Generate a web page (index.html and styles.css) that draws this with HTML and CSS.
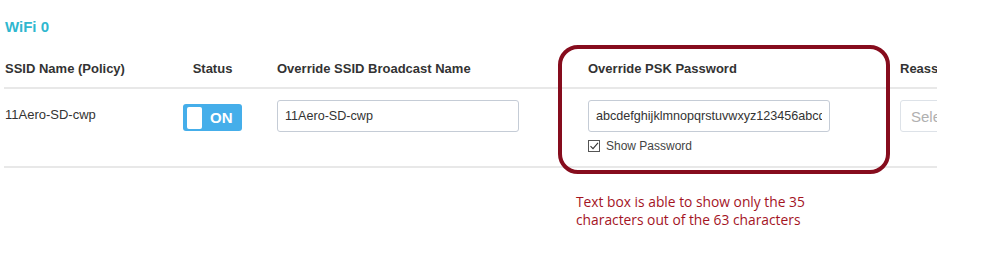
FILE: index.html
```html
<!DOCTYPE html>
<html lang="en">
<head>
    <meta charset="UTF-8">
    <title>WiFi 0 SSID Overrides</title>
    <link rel="stylesheet" href="styles.css">
</head>
<body>
    <div class="page">
        <h2 class="section-title">WiFi 0</h2>

        <div class="ssid-table">
            <div class="row head">
                <div class="cell c-name">SSID Name (Policy)</div>
                <div class="cell c-status">Status</div>
                <div class="cell c-bcast">Override SSID Broadcast Name</div>
                <div class="cell c-psk">Override PSK Password</div>
                <div class="cell c-reassign">Reassign</div>
            </div>
            <div class="row body">
                <div class="cell c-name">11Aero-SD-cwp</div>
                <div class="cell c-status">
                    <span class="toggle"><span class="knob"></span>ON</span>
                </div>
                <div class="cell c-bcast">
                    <input type="text" class="field" value="11Aero-SD-cwp">
                </div>
                <div class="cell c-psk">
                    <input type="text" class="field" value="abcdefghijklmnopqrstuvwxyz123456abcdefghijklmnopqrstuvwxyz12345">
                    <label class="show-pw">
                        <span class="check">
                            <svg width="12" height="12" viewBox="0 0 12 12"><path d="M2.5 6.2 L5 8.6 L10 2.8" fill="none" stroke="#333" stroke-width="1.1"/></svg>
                        </span>
                        Show Password
                    </label>
                </div>
                <div class="cell c-reassign">
                    <div class="select">Select</div>
                </div>
            </div>
        </div>

        <!-- annotation drawn over the screenshot -->
        <div class="callout-box"></div>
        <p class="callout-text">Text box is able to show only the 35<br>characters out of the 63 characters</p>
    </div>
</body>
</html>
```

FILE: styles.css
```css
body {
    margin: 0;
    background-color: #fff;
    font-family: "Liberation Sans", Arial, sans-serif;
    color: #333;
}
.page {
    position: relative;
    width: 999px;
    height: 271px;
    padding: 0 0 0 4px;
    box-sizing: border-box;
}
.section-title {
    margin: 0;
    padding: 18px 0 0 1px;
    font-size: 15px;
    line-height: 17px;
    font-weight: bold;
    color: #2fb7cf;
}
.ssid-table {
    width: 933px;
    margin-top: 10px;
    overflow: hidden;
}
.row {
    display: grid;
    grid-template-columns: 165px 87px 311px 312px 60px;
    border-bottom: 2px solid #e8e8e8;
}
.row.head {
    height: 42px;
    align-items: start;
    font-weight: bold;
    font-size: 13px;
}
.row.head .cell {
    padding-top: 16px;
}
.row.body {
    height: 77px;
    align-items: start;
    font-size: 13px;
}
.cell {
    white-space: nowrap;
}
.c-name {
    padding-left: 1px;
}
.row.body .c-name {
    padding-top: 18px;
}
.c-status {
    display: flex;
    justify-content: center;
}
.c-bcast, .c-psk, .c-reassign {
    padding-left: 21px;
}
.row.body .c-bcast,
.row.body .c-psk,
.row.body .c-reassign {
    padding-top: 11px;
}
.row.body .c-status {
    padding-top: 15px;
}
.toggle {
    display: flex;
    align-items: center;
    box-sizing: border-box;
    width: 59px;
    height: 27px;
    padding: 3px 4px;
    background-color: #45aeea;
    border-radius: 3px;
    color: #fff;
    font-weight: bold;
    font-size: 15px;
}
.knob {
    width: 15px;
    height: 22px;
    background-color: #fff;
    border-radius: 2px;
    margin-right: 8px;
}
.field {
    display: block;
    box-sizing: border-box;
    width: 242px;
    height: 32px;
    padding: 0 7px;
    border: 1px solid #c5ccd6;
    border-radius: 3px;
    font-family: "Liberation Sans", Arial, sans-serif;
    font-size: 12.6px;
    color: #333;
    background: #fff;
}
.show-pw {
    display: flex;
    align-items: center;
    gap: 6px;
    margin-top: 7px;
    font-size: 12px;
    color: #444;
}
.check {
    display: flex;
    width: 12px;
    height: 12px;
    box-sizing: border-box;
    border: 1px solid #555;
}
.check svg {
    margin: -1px;
}
.select {
    box-sizing: border-box;
    width: 120px;
    height: 32px;
    padding: 7px 10px;
    border: 1px solid #dde2e8;
    border-radius: 3px;
    color: #b0b0b0;
    font-size: 15px;
}
.callout-box {
    position: absolute;
    left: 558px;
    top: 45px;
    width: 332px;
    height: 129px;
    box-sizing: border-box;
    border: 4px solid #860c1d;
    border-radius: 20px;
}
.callout-text {
    position: absolute;
    left: 576px;
    top: 193px;
    margin: 0;
    font-family: "Open Sans", sans-serif;
    font-size: 13.8px;
    line-height: 18px;
    color: #a4141f;
}
```
